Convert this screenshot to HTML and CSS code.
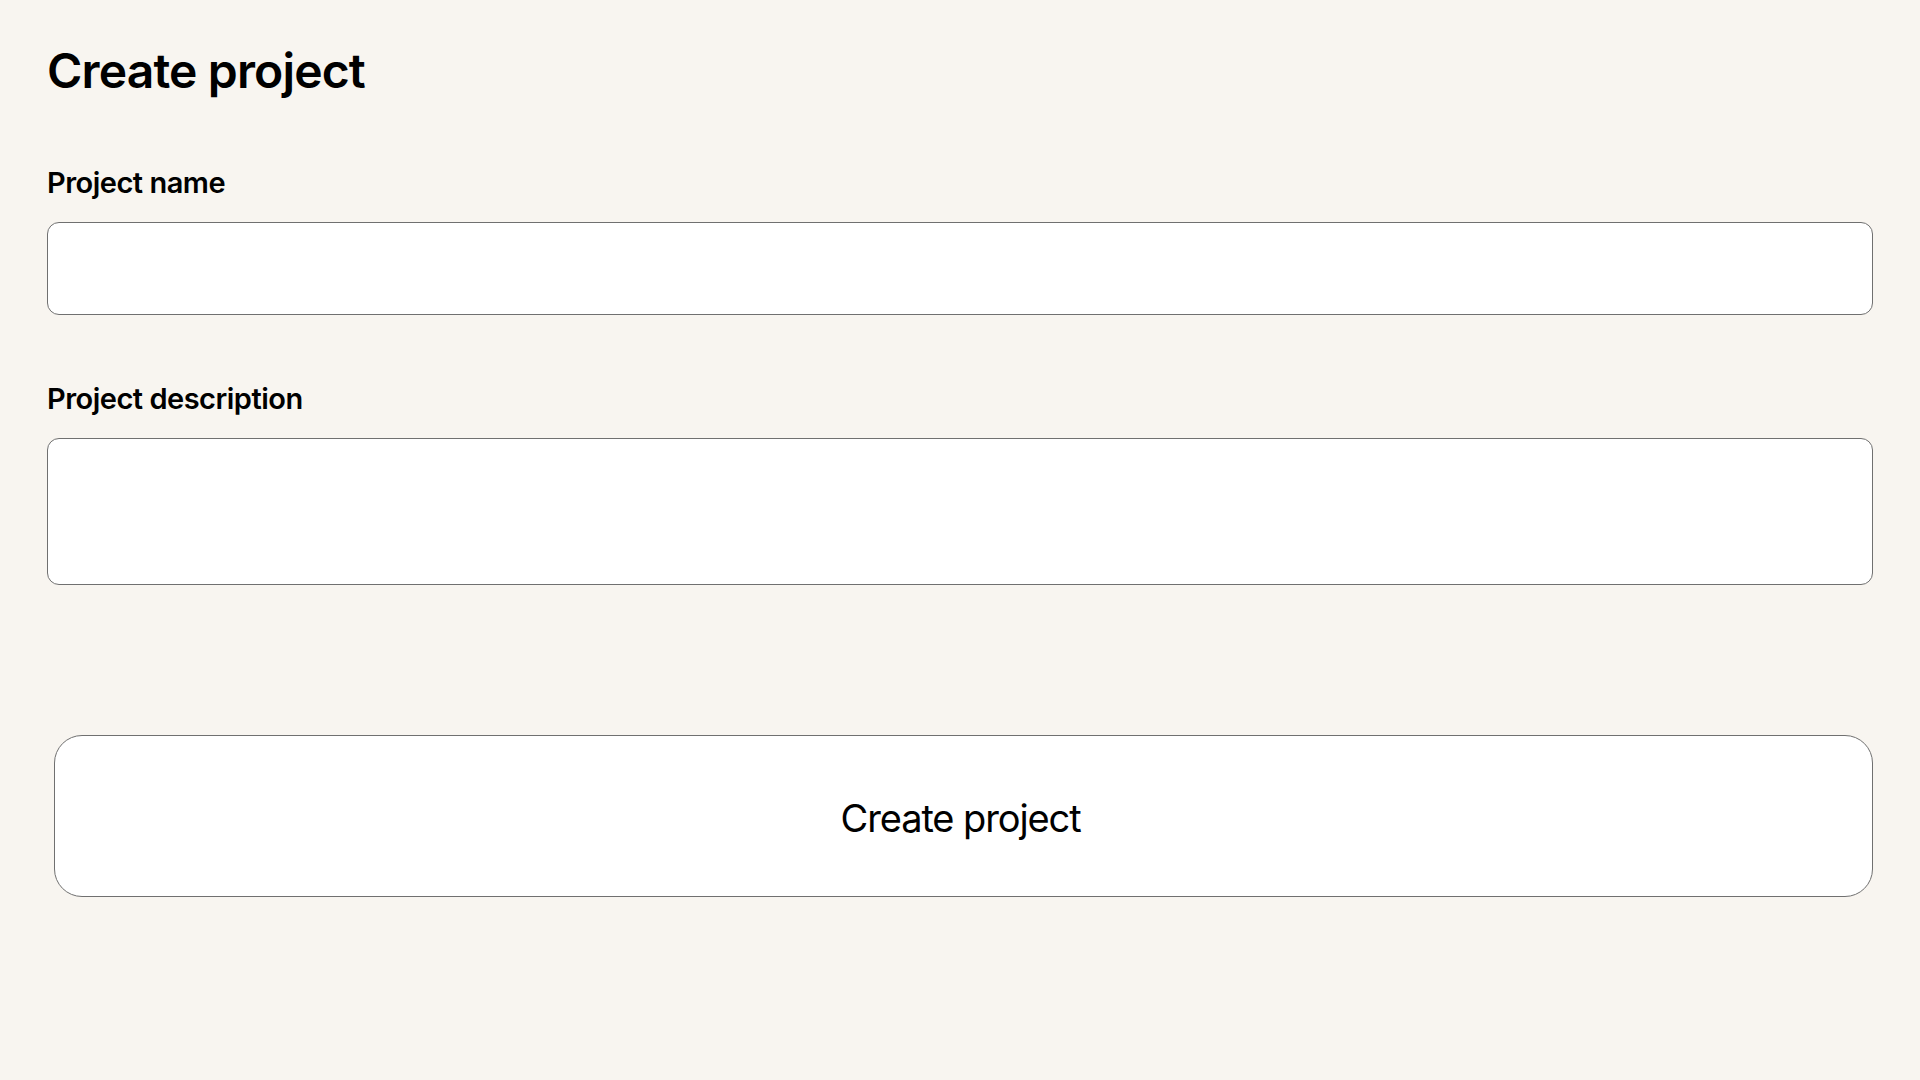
FILE: index.html
```html
<!DOCTYPE html>
<html lang="en">
<head>
<meta charset="utf-8">
<title>Create project</title>
<link rel="stylesheet" href="styles.css">
</head>
<body>
<main class="page">
  <h1 class="title">Create project</h1>
  <form class="form">
    <label class="field">
      <span class="label">Project name</span>
      <input class="input" type="text">
    </label>
    <label class="field">
      <span class="label">Project description</span>
      <textarea class="textarea"></textarea>
    </label>
    <button class="submit" type="button">Create project</button>
  </form>
</main>
</body>
</html>
```

FILE: styles.css
```css
html, body {
  margin: 0;
  padding: 0;
  background: #f8f5f0;
}
body {
  font-family: Inter, "Noto Sans", sans-serif;
  color: #000;
}
.page {
  padding: 42px 47px 0 47px;
}
.title {
  margin: 0;
  font-size: 48px;
  font-weight: 600;
  line-height: 58px;
  letter-spacing: -0.85px;
}
.form {
  display: flex;
  flex-direction: column;
  margin-top: 66px;
}
.field {
  display: flex;
  flex-direction: column;
  gap: 22px;
  margin-bottom: 67px;
}
.label {
  font-size: 29px;
  font-weight: 600;
  line-height: 34px;
  letter-spacing: -0.5px;
}
.input, .textarea {
  box-sizing: border-box;
  width: 100%;
  margin: 0;
  border: 1px solid #707070;
  border-radius: 12px;
  background: #fff;
  font: inherit;
  outline: none;
}
.input {
  height: 93px;
}
.textarea {
  height: 147px;
  resize: none;
  display: block;
}
.field:last-of-type {
  margin-bottom: 150px;
}
.submit {
  box-sizing: border-box;
  margin-left: 7px;
  height: 162px;
  border: 1px solid #707070;
  border-radius: 28px;
  background: #fff;
  font-family: Inter, "Noto Sans", sans-serif;
  font-size: 38px;
  font-weight: 400;
  color: #000;
  letter-spacing: -1.1px;
  padding: 4px 6px 0 0;
}
```
